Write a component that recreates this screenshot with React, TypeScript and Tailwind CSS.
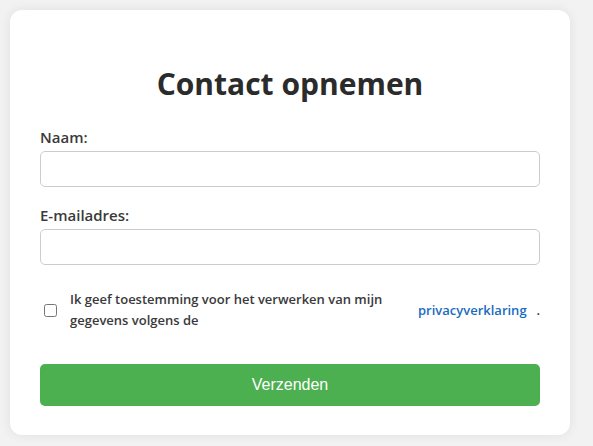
import React from 'react';

const App: React.FC = () => {
  return (
    <div className="min-h-screen bg-[#f2f2f2] p-[10px] pr-[23px] font-['Open_Sans',sans-serif] text-[#333]">
      <div className="bg-white rounded-[12px] shadow-[0_0_12px_rgba(0,0,0,0.08)] px-[30px] pt-[29px] pb-[29px]">
        <h2 className="mt-[26px] mb-[22px] text-center text-[30px] leading-[38px] font-bold text-[#2b2b2b]">
          Contact opnemen
        </h2>
        <form className="flex flex-col">
          <label htmlFor="naam" className="text-[15px] leading-[24px] font-semibold text-[#3a3a3a]">
            Naam:
          </label>
          <input
            id="naam"
            type="text"
            className="mt-[2px] h-[36px] w-full rounded-[5px] border border-[#cccccc] bg-white px-2"
          />
          <label htmlFor="email" className="mt-[16px] text-[15px] leading-[24px] font-semibold text-[#3a3a3a]">
            E-mailadres:
          </label>
          <input
            id="email"
            type="email"
            className="mt-[2px] h-[36px] w-full rounded-[5px] border border-[#cccccc] bg-white px-2"
          />
          <div className="mt-[24px] flex items-center gap-[10px] text-[13px] leading-[21px] font-semibold">
            <input type="checkbox" className="ml-[4px] mr-[3px] h-[13px] w-[13px] shrink-0" />
            <span className="w-[338px] shrink-0 text-[#3a3a3a]">
              Ik geef toestemming voor het verwerken van mijn gegevens volgens de
            </span>
            <a href="#" className="text-[#1a6cc0]">privacyverklaring</a>
            <span className="text-[#3a3a3a]">.</span>
          </div>
          <button
            type="button"
            className="mt-[33px] h-[42px] w-full rounded-[5px] bg-[#4caf50] font-['Liberation_Sans',sans-serif] text-[16px] text-white"
          >
            Verzenden
          </button>
        </form>
      </div>
    </div>
  );
};

export default App;
